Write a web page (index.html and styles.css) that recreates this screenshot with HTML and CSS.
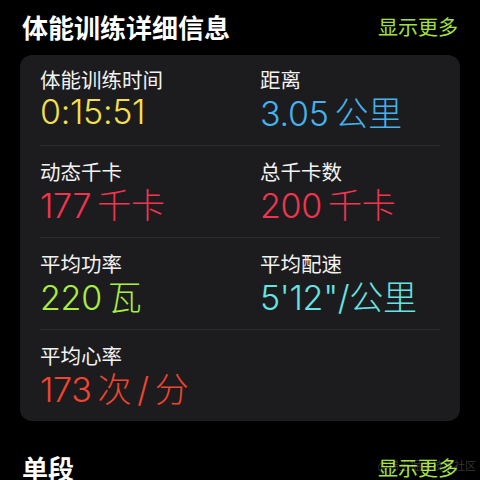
FILE: index.html
```html
<!DOCTYPE html>
<html lang="zh-CN">
<head>
    <meta charset="UTF-8">
    <meta name="viewport" content="width=device-width, initial-scale=1.0">
    <title>体能训练详细信息</title>
    <link rel="stylesheet" href="styles.css">
</head>
<body>
    <div class="page">
        <div class="section-head">
            <h2>体能训练详细信息</h2>
            <span class="more">显示更多</span>
        </div>

        <div class="card">
            <div class="row">
                <div class="stat">
                    <div class="label">体能训练时间</div>
                    <div class="value yellow">0:15:51</div>
                </div>
                <div class="stat">
                    <div class="label">距离</div>
                    <div class="value blue">3.05<span class="unit">公里</span></div>
                </div>
            </div>
            <div class="row">
                <div class="stat">
                    <div class="label">动态千卡</div>
                    <div class="value pink">177<span class="unit">千卡</span></div>
                </div>
                <div class="stat">
                    <div class="label">总千卡数</div>
                    <div class="value pink">200<span class="unit">千卡</span></div>
                </div>
            </div>
            <div class="row">
                <div class="stat">
                    <div class="label">平均功率</div>
                    <div class="value green">220<span class="unit">瓦</span></div>
                </div>
                <div class="stat">
                    <div class="label">平均配速</div>
                    <div class="value cyan">5'12"/<span class="unit tight">公里</span></div>
                </div>
            </div>
            <div class="row">
                <div class="stat">
                    <div class="label">平均心率</div>
                    <div class="value red">173<span class="unit">次</span><span class="slash">/</span><span class="unit tight">分</span></div>
                </div>
            </div>
        </div>

        <div class="section-head second">
            <h2>单段</h2>
            <span class="more">显示更多</span>
        </div>
    </div>
    <div class="watermark">@稀土掘金技术社区</div>
</body>
</html>
```

FILE: styles.css
```css
body {
    margin: 0;
    background: #000;
    color: #fff;
    font-family: Inter, "Noto Sans CJK SC", sans-serif;
    height: 480px;
    overflow: hidden;
}
.page {
    padding: 0 20px;
}
.section-head {
    display: flex;
    justify-content: space-between;
    align-items: center;
    height: 55px;
    padding: 0 2px 2px;
    box-sizing: border-box;
}
.section-head h2 {
    margin: 0;
    font-family: "Noto Sans CJK SC", sans-serif;
    font-size: 26px;
    font-weight: 700;
    line-height: 30px;
}
.more {
    font-family: "Noto Sans CJK SC", sans-serif;
    font-size: 20px;
    line-height: 24px;
    color: #a5e13b;
}
.second {
    margin-top: 20px;
    height: 56px;
}
.card {
    background: #1c1c1e;
    border-radius: 12px;
    padding: 0 20px;
}
.row {
    display: grid;
    grid-template-columns: 220px 1fr;
    padding: 13px 0 13px;
    border-top: 1px solid #2c2c2e;
}
.row:first-child {
    border-top: none;
    padding-top: 12px;
}
.label {
    font-family: "Noto Sans CJK SC", sans-serif;
    font-size: 20.5px;
    line-height: 25px;
    color: #f2f2f2;
}
.value {
    font-size: 34px;
    font-weight: 300;
    line-height: 40px;
    height: 40px;
    letter-spacing: -0.3px;
    white-space: nowrap;
}
.unit {
    font-family: "Noto Sans CJK SC", sans-serif;
    font-weight: 300;
    margin-left: 6px;
}
.unit.tight {
    margin-left: 0;
}
.slash {
    margin: 0 6px;
}
.yellow { color: #f6e04a; }
.blue { color: #45b2f0; }
.pink { color: #f2344f; }
.green { color: #a8ef3e; }
.cyan { color: #66e4e2; }
.red { color: #f2442f; }
.watermark {
    position: absolute;
    right: 4px;
    top: 458px;
    font-family: "Noto Sans CJK SC", sans-serif;
    font-size: 11px;
    line-height: 14px;
    color: rgba(255, 255, 255, 0.22);
}
```
